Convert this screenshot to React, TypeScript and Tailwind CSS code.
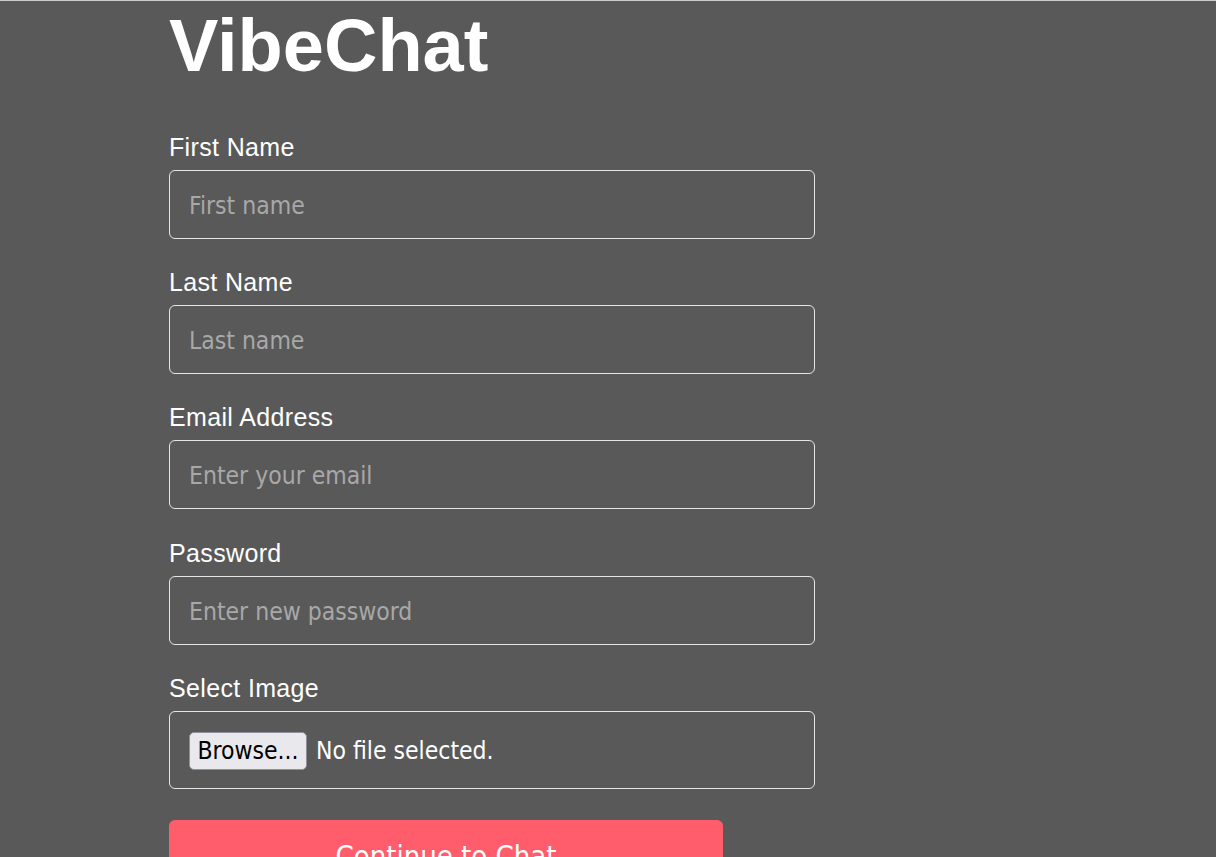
import React from 'react';

const fieldFont = { fontFamily: '"DejaVu Sans Condensed", "DejaVu Sans", sans-serif', fontStretch: 'condensed' as const };

interface FieldProps {
    label: string;
    placeholder: string;
    type?: string;
    gap?: string;
}

const Field: React.FC<FieldProps> = ({ label, placeholder, type = 'text', gap = 'mt-[30px]' }) => {
    return (
        <div className={gap}>
            <label className="block text-[25px] leading-[27px] tracking-[0.35px] text-white mb-[9px]">{label}</label>
            <input
                type={type}
                placeholder={placeholder}
                style={fieldFont}
                className="block w-full h-[69px] rounded-md border border-[#e6e6e6] bg-transparent pl-[19px] pt-[2px] text-[24.5px] text-white placeholder:text-[#a8a8a8] outline-none"
            />
        </div>
    );
};

export default function App() {
    return (
        <div
            className="min-h-[857px] bg-[#595959] border-t border-[#cdcdcd] overflow-hidden"
            style={{ fontFamily: '"Liberation Sans", Arial, sans-serif' }}
        >
            <div className="ml-[169px] w-[646px] pt-[8px]">
                <h1 className="text-[74px] leading-[73px] font-bold text-white">VibeChat</h1>

                <form className="mt-[52px]" onSubmit={(e) => e.preventDefault()}>
                    <Field label="First Name" placeholder="First name" gap="mt-0" />
                    <Field label="Last Name" placeholder="Last name" />
                    <Field label="Email Address" placeholder="Enter your email" type="email" />
                    <Field label="Password" placeholder="Enter new password" type="password" gap="mt-[31px]" />

                    <div className="mt-[30px]">
                        <label className="block text-[25px] leading-[27px] tracking-[0.35px] text-white mb-[9px]">Select Image</label>
                        <label
                            style={fieldFont}
                            className="flex items-center w-full h-[78px] rounded-md border border-[#e6e6e6] pl-[19px] pt-[2px] text-[24.5px] cursor-pointer"
                        >
                            <input type="file" accept="image/*" className="hidden" />
                            <span className="flex items-center justify-center w-[118px] h-[38px] rounded-[5px] border border-[#8f8f9d] bg-[#e9e9ed] text-black">
                                Browse...
                            </span>
                            <span className="ml-[9px] text-white">No file selected.</span>
                        </label>
                    </div>

                    <button
                        type="submit"
                        style={fieldFont}
                        className="mt-[31px] w-[554px] pt-[19px] pb-[19px] leading-[34px] rounded-md bg-[#ff5c6c] text-[29px] text-white"
                    >
                        Continue to Chat
                    </button>
                </form>
            </div>
        </div>
    );
}
